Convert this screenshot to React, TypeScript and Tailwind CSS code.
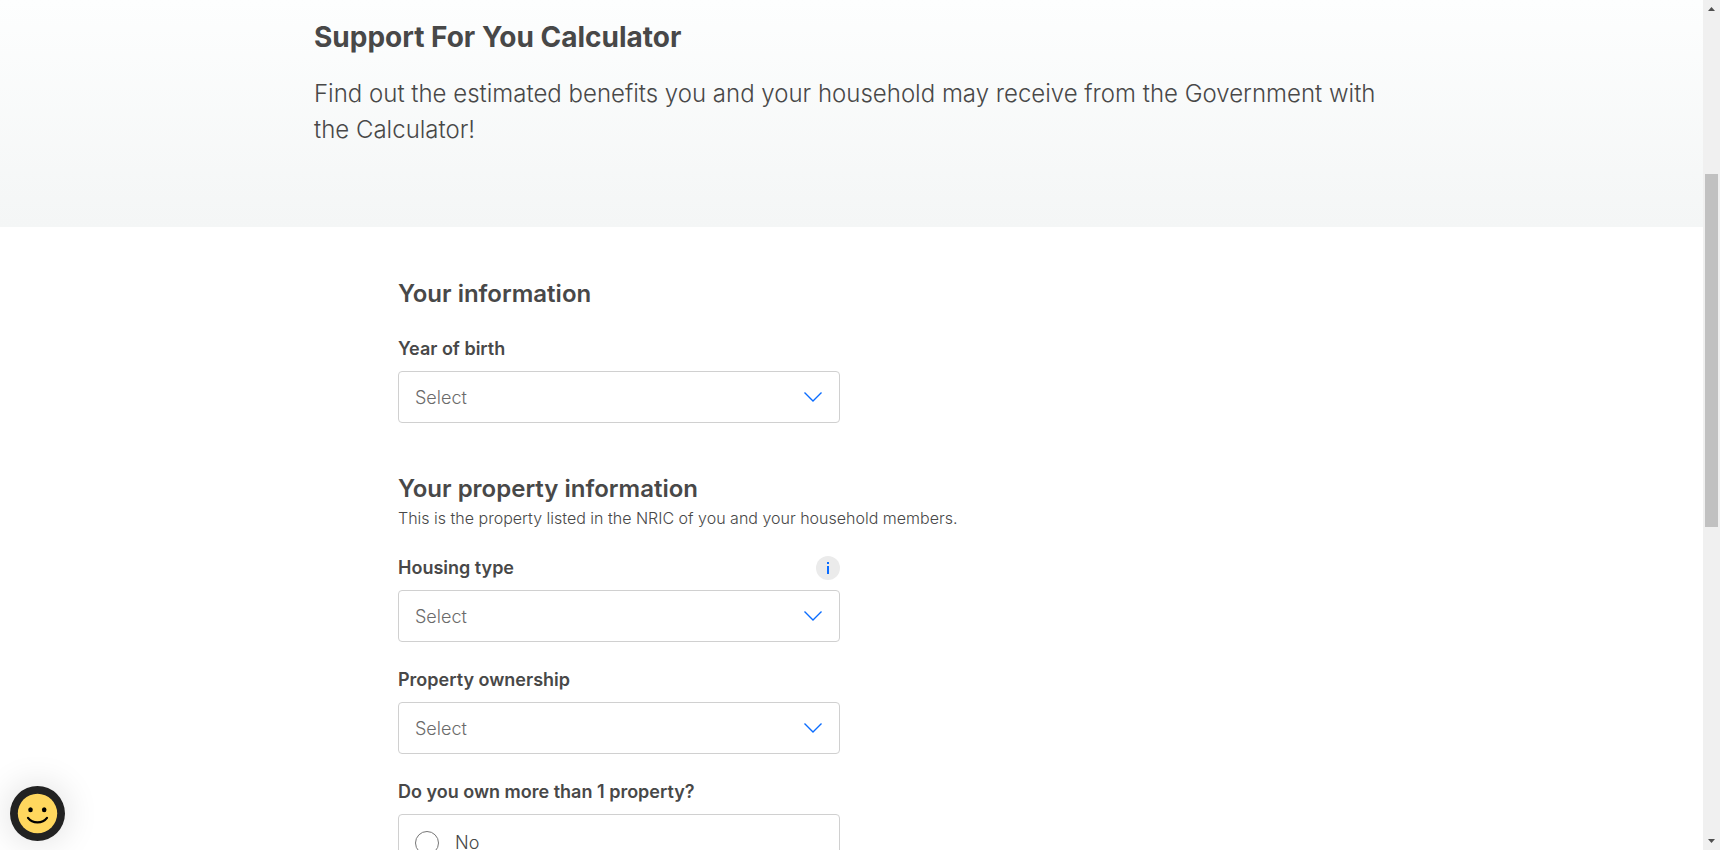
import React from 'react';

const labelClass = 'text-[18px] leading-6 font-semibold';

function SelectField({ id, label, info }: { id: string; label: string; info?: boolean }) {
  return (
    <div>
      <div className="mb-2.5 flex h-6 items-center justify-between">
        <label htmlFor={id} className={labelClass}>
          {label}
        </label>
        {info && (
          <button
            type="button"
            aria-label={`More about ${label}`}
            className="flex size-6 items-center justify-center rounded-full bg-[#ebebeb]"
          >
            <svg viewBox="0 0 24 24" className="size-6" fill="#0a6cff" aria-hidden="true">
              <rect x="11" y="6" width="2" height="2" />
              <rect x="11" y="10" width="2" height="8" />
            </svg>
          </button>
        )}
      </div>
      <div className="grid items-center">
        <select
          id={id}
          defaultValue=""
          className="col-start-1 row-start-1 h-[52px] w-full appearance-none rounded-[4px] border border-[#d0d0d0] bg-white px-4 text-[18px] font-light text-[#6b6b6b]"
        >
          <option value="">Select</option>
        </select>
        <svg
          viewBox="0 0 18 10"
          className="pointer-events-none col-start-1 row-start-1 mr-[18px] h-2.5 w-[18px] justify-self-end"
          fill="none"
          stroke="#0a6cff"
          strokeWidth="1.4"
          aria-hidden="true"
        >
          <path d="M0.5 0.6 L9 9 L17.5 0.6" />
        </svg>
      </div>
    </div>
  );
}

function ScrollRail() {
  return (
    <div className="flex h-full w-[17px] shrink-0 flex-col items-center bg-[#f0f0f0]" aria-hidden="true">
      <svg viewBox="0 0 17 17" className="h-[17px] w-full shrink-0" fill="#505050">
        <path d="M5 11 L8.5 7 L12 11 Z" />
      </svg>
      <div className="grow-[157]" />
      <div className="w-[13px] grow-[353] bg-[#c1c1c1]" />
      <div className="grow-[306]" />
      <svg viewBox="0 0 17 17" className="h-[17px] w-full shrink-0" fill="#505050">
        <path d="M5 6 L8.5 10 L12 6 Z" />
      </svg>
    </div>
  );
}

export default function App() {
  return (
    <div className="flex h-screen bg-white font-['Inter',sans-serif] text-[#484848]">
      <main className="h-full min-w-0 flex-1 overflow-hidden">
        <header className="bg-linear-to-b from-[#fdfefe] to-[#f4f6f6] px-6 pt-[17px] pb-[79px]">
          <div className="mx-auto max-w-[1075px]">
            <h1 className="text-[28px] leading-10 font-bold">Support For You Calculator</h1>
            <p className="mt-[19px] text-[24px] leading-9 font-light">
              Find out the estimated benefits you and your household may receive from the Government with the
              Calculator!
            </p>
          </div>
        </header>

        <div className="px-6">
          <form className="mx-auto max-w-[907px] pt-[51px]">
            <section>
              <h2 className="text-[24px] leading-8 font-semibold">Your information</h2>
              <div className="mt-[27px] max-w-[442px]">
                <SelectField id="birth-year" label="Year of birth" />
              </div>
            </section>

            <section className="mt-[50px]">
              <h2 className="text-[24px] leading-8 font-semibold">Your property information</h2>
              <p className="text-[16px] leading-[26px] font-light">
                This is the property listed in the NRIC of you and your household members.
              </p>
              <div className="mt-[25px] flex max-w-[442px] flex-col gap-[26px]">
                <SelectField id="housing-type" label="Housing type" info />
                <SelectField id="ownership" label="Property ownership" />
                <fieldset>
                  <legend className={`mb-2.5 ${labelClass}`}>Do you own more than 1 property?</legend>
                  <div className="rounded-[4px] border border-[#d0d0d0] p-4">
                    <label className="flex items-center gap-4 text-[18px] leading-6 font-light">
                      <input
                        type="radio"
                        name="multiple-property"
                        value="no"
                        className="size-6 appearance-none rounded-full border border-[#767676] bg-white checked:border-8 checked:border-[#0a6cff]"
                      />
                      No
                    </label>
                  </div>
                </fieldset>
              </div>
            </section>
          </form>
        </div>
      </main>

      <ScrollRail />

      <button
        type="button"
        aria-label="Give feedback"
        className="fixed bottom-[9px] left-[10px] size-[55px] rounded-full shadow-[0_0_36px_rgba(0,0,0,0.14)]"
      >
        <svg viewBox="0 0 55 55" className="size-full" aria-hidden="true">
          <circle cx="27.5" cy="27.5" r="27.5" fill="#222222" />
          <circle cx="27.5" cy="27.5" r="19.7" fill="#ffd75e" />
          <ellipse cx="20.5" cy="23.8" rx="2.3" ry="2.5" fill="#000000" />
          <ellipse cx="34.2" cy="23.8" rx="2.3" ry="2.5" fill="#000000" />
          <path
            d="M18 31.8 C22.5 37.8 32.5 37.8 37 31.8"
            fill="none"
            stroke="#000000"
            strokeWidth="2.2"
            strokeLinecap="round"
          />
        </svg>
      </button>
    </div>
  );
}
